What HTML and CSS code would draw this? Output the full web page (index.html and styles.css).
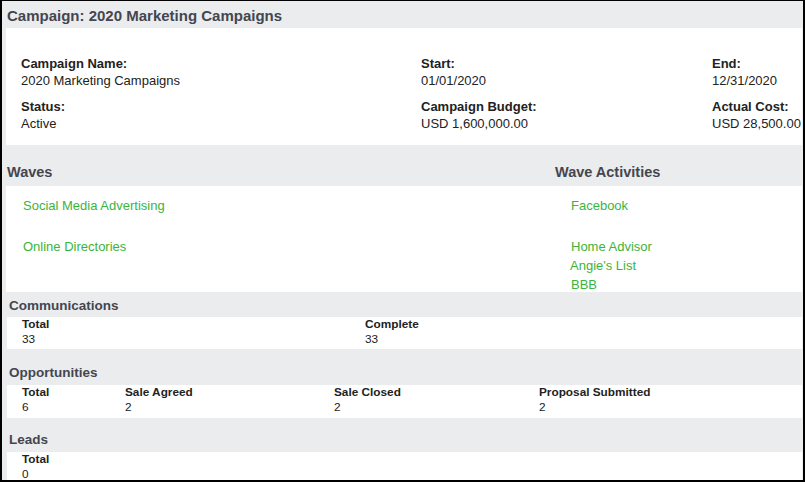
FILE: index.html
```html
<!DOCTYPE html>
<html lang="en">
<head>
    <meta charset="UTF-8">
    <title>Campaign: 2020 Marketing Campaigns</title>
    <link rel="stylesheet" href="styles.css">
</head>
<body>
<div class="frame">
    <h2 class="page-title">Campaign: 2020 Marketing Campaigns</h2>

    <div class="panel summary">
        <div class="field">
            <div class="label">Campaign Name:</div>
            <div class="value">2020 Marketing Campaigns</div>
        </div>
        <div class="field">
            <div class="label">Start:</div>
            <div class="value">01/01/2020</div>
        </div>
        <div class="field">
            <div class="label">End:</div>
            <div class="value">12/31/2020</div>
        </div>
        <div class="field">
            <div class="label">Status:</div>
            <div class="value">Active</div>
        </div>
        <div class="field">
            <div class="label">Campaign Budget:</div>
            <div class="value">USD 1,600,000.00</div>
        </div>
        <div class="field">
            <div class="label">Actual Cost:</div>
            <div class="value">USD 28,500.00</div>
        </div>
    </div>

    <div class="waves-head">
        <h3>Waves</h3>
        <h3>Wave Activities</h3>
    </div>
    <div class="panel waves">
        <div class="wave-row">
            <a href="#" class="wave">Social Media Advertising</a>
            <div class="activities">
                <a href="#">Facebook</a>
            </div>
        </div>
        <div class="wave-row">
            <a href="#" class="wave">Online Directories</a>
            <div class="activities">
                <a href="#">Home Advisor</a>
                <a href="#" class="nudge">Angie's List</a>
                <a href="#">BBB</a>
            </div>
        </div>
    </div>

    <h4 class="stat-head first">Communications</h4>
    <div class="panel stats comms">
        <div><div class="label">Total</div><div>33</div></div>
        <div><div class="label">Complete</div><div>33</div></div>
    </div>

    <h4 class="stat-head">Opportunities</h4>
    <div class="panel stats opps">
        <div><div class="label">Total</div><div>6</div></div>
        <div><div class="label">Sale Agreed</div><div>2</div></div>
        <div><div class="label">Sale Closed</div><div>2</div></div>
        <div><div class="label">Proposal Submitted</div><div>2</div></div>
    </div>

    <h4 class="stat-head leads-head">Leads</h4>
    <div class="panel stats leads">
        <div><div class="label">Total</div><div>0</div></div>
    </div>
</div>
</body>
</html>
```

FILE: styles.css
```css
* {
    margin: 0;
    padding: 0;
    box-sizing: border-box;
    font-family: "Liberation Sans", Arial, sans-serif;
}

body {
    background-color: #fff;
}

.frame {
    width: 805px;
    height: 482px;
    overflow: hidden;
    background-color: #ebecee;
    border-style: solid;
    border-color: #000;
    border-width: 1px 2px 2px 2px;
    color: #222;
}

.page-title {
    font-size: 15px;
    line-height: 18px;
    font-weight: bold;
    color: #44464e;
    padding: 6px 0 3px 5px;
    height: 27px;
}

.panel {
    background-color: #fff;
    margin: 0 1px 0 4px;
}

/* campaign details */
.summary {
    display: grid;
    grid-template-columns: 400px 291px auto;
    row-gap: 9px;
    padding: 27px 0 13px 15px;
    height: 117px;
    font-size: 13px;
    line-height: 17px;
}

.summary .label {
    font-weight: bold;
}

/* waves */
.waves-head {
    display: grid;
    grid-template-columns: 548px auto;
    padding: 19px 0 5px 5px;
    height: 41px;
}

.waves-head h3 {
    font-size: 14.5px;
    line-height: 17px;
    color: #44464e;
}

.waves {
    height: 106px;
    padding-top: 10px;
    font-size: 13px;
    line-height: 19px;
}

.wave-row {
    display: grid;
    grid-template-columns: 548px auto;
    margin-bottom: 22px;
}

.waves a {
    color: #3cb43c;
    text-decoration: none;
    display: block;
}

.wave {
    padding-left: 17px;
    align-self: start;
}

.activities {
    padding-left: 17px;
}

.activities .nudge {
    margin-left: -1px;
}

/* stats */
.stat-head {
    font-size: 13.5px;
    line-height: 16px;
    color: #44464e;
    padding: 16px 0 4px 7px;
    height: 36px;
}

.stat-head.first {
    padding-top: 6px;
    padding-bottom: 3px;
    height: 25px;
}

.stat-head.leads-head {
    padding-top: 14px;
    height: 34px;
}

.stats {
    margin-left: 5px;
    display: grid;
    padding: 0 0 3px 15px;
    height: 32px;
    font-size: 11.8px;
    line-height: 14.5px;
}

.stats .label {
    font-weight: bold;
}

.comms {
    grid-template-columns: 343px auto;
}

.opps {
    grid-template-columns: 103px 209px 205px auto;
    height: 33px;
}

.leads {
    grid-template-columns: auto;
    height: 40px;
}
```
